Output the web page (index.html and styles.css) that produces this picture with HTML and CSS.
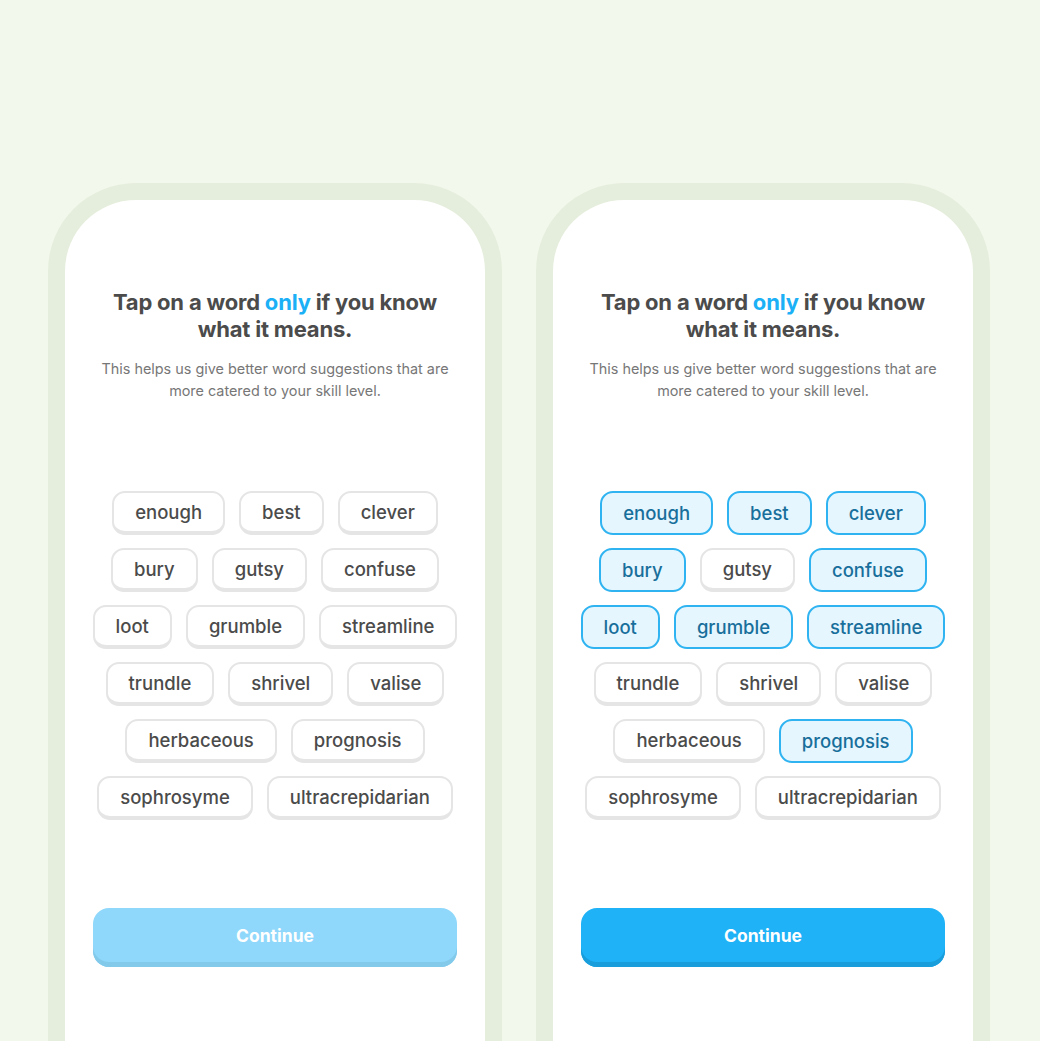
FILE: index.html
```html
<!DOCTYPE html>
<html lang="en">
<head>
<meta charset="utf-8">
<title>Word knowledge</title>
<link rel="stylesheet" href="styles.css">
</head>
<body>
<div class="stage">
  <section class="phone">
    <div class="screen">
      <h1 class="title">Tap on a word <span class="accent">only</span> if you know what it means.</h1>
      <p class="subtitle">This helps us give better word suggestions that are more catered to your skill level.</p>
      <div class="words">
        <div class="row"><span class="chip">enough</span><span class="chip">best</span><span class="chip">clever</span></div>
        <div class="row"><span class="chip">bury</span><span class="chip">gutsy</span><span class="chip">confuse</span></div>
        <div class="row"><span class="chip">loot</span><span class="chip">grumble</span><span class="chip">streamline</span></div>
        <div class="row"><span class="chip">trundle</span><span class="chip">shrivel</span><span class="chip">valise</span></div>
        <div class="row"><span class="chip">herbaceous</span><span class="chip">prognosis</span></div>
        <div class="row"><span class="chip">sophrosyme</span><span class="chip">ultracrepidarian</span></div>
      </div>
      <button class="continue disabled">Continue</button>
    </div>
  </section>
  <section class="phone">
    <div class="screen">
      <h1 class="title">Tap on a word <span class="accent">only</span> if you know what it means.</h1>
      <p class="subtitle">This helps us give better word suggestions that are more catered to your skill level.</p>
      <div class="words">
        <div class="row"><span class="chip selected">enough</span><span class="chip selected">best</span><span class="chip selected">clever</span></div>
        <div class="row"><span class="chip selected">bury</span><span class="chip">gutsy</span><span class="chip selected">confuse</span></div>
        <div class="row"><span class="chip selected">loot</span><span class="chip selected">grumble</span><span class="chip selected">streamline</span></div>
        <div class="row"><span class="chip">trundle</span><span class="chip">shrivel</span><span class="chip">valise</span></div>
        <div class="row"><span class="chip">herbaceous</span><span class="chip selected">prognosis</span></div>
        <div class="row"><span class="chip">sophrosyme</span><span class="chip">ultracrepidarian</span></div>
      </div>
      <button class="continue">Continue</button>
    </div>
  </section>
</div>
</body>
</html>
```

FILE: styles.css
```css
html, body {
  margin: 0;
  padding: 0;
  height: 100%;
  overflow: hidden;
  background: #f3f8ed;
  font-family: "Inter", "Lato", "Liberation Sans", sans-serif;
}

.stage {
  display: flex;
  gap: 34px;
  padding: 183px 0 0 48px;
}

.phone {
  width: 454px;
  height: 900px;
  box-sizing: border-box;
  border: 17px solid #e5eedc;
  border-bottom: none;
  border-radius: 88px 88px 0 0;
  background: #fff;
}

.screen {
  display: flex;
  flex-direction: column;
  align-items: center;
  padding-top: 89px;
}

.title {
  margin: 0;
  width: 360px;
  text-align: center;
  font-size: 22px;
  line-height: 27px;
  font-weight: 700;
  color: #4b4b4b;
  letter-spacing: -0.2px;
}

.accent {
  color: #1cb0f6;
}

.subtitle {
  margin: 15px 0 0;
  width: 370px;
  text-align: center;
  font-size: 14.4px;
  line-height: 22px;
  color: #777;
}

.words {
  margin-top: 89px;
  display: flex;
  flex-direction: column;
  gap: 13px;
}

.row {
  display: flex;
  justify-content: center;
  gap: 14px;
}

.chip {
  box-sizing: border-box;
  height: 44px;
  padding: 0 21px;
  border: 2px solid #e5e5e5;
  border-bottom-width: 4px;
  border-radius: 13px;
  font-size: 18.5px;
  font-weight: 500;
  line-height: 38px;
  color: #4b4b4b;
  background: #fff;
}

.chip.selected {
  border: 2px solid #2fb4f1;
  line-height: 40px;
  background: #e6f6fe;
  color: #186f9b;
}

.continue {
  margin-top: 88px;
  width: 364px;
  height: 59px;
  border: none;
  border-radius: 16px;
  background: #1fb2f7;
  box-shadow: inset 0 -5px 0 #1a9ddb;
  color: #fff;
  font-family: inherit;
  font-size: 17.5px;
  font-weight: 700;
  padding: 0 0 5px;
}

.continue.disabled {
  background: #8fd8fb;
  box-shadow: inset 0 -5px 0 #83c9ea;
}
```
